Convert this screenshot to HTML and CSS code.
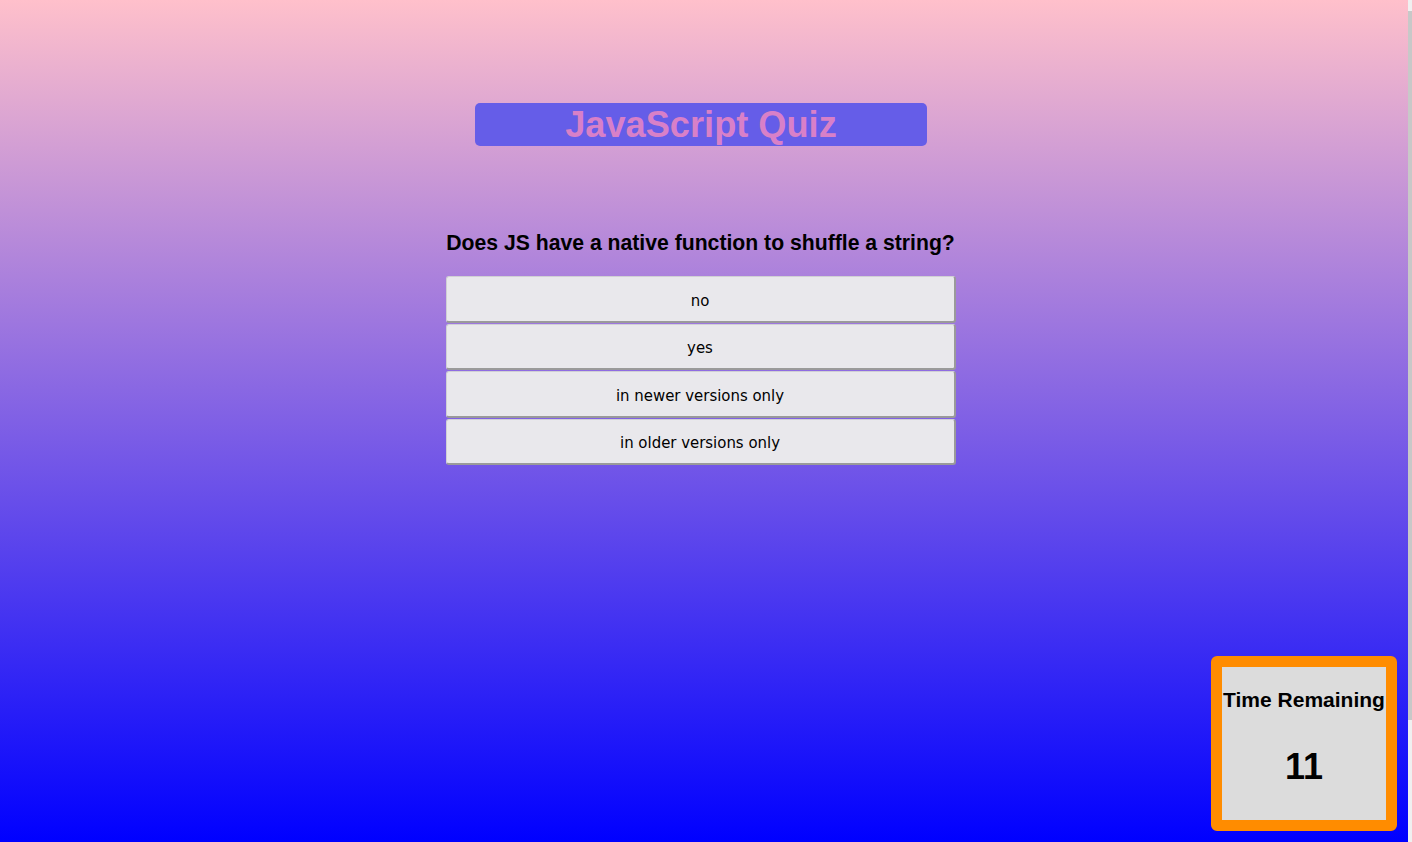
FILE: index.html
```html
<!DOCTYPE html>
<html>
<head>
<meta charset="utf-8">
<link rel="stylesheet" href="styles.css">
</head>
<body>
<div class="page">
  <header class="title-wrap">
    <h1 class="title">JavaScript Quiz</h1>
  </header>
  <main class="quiz">
    <h2 class="question">Does JS have a native function to shuffle a string?</h2>
    <div class="answers">
      <button class="answer">no</button>
      <button class="answer">yes</button>
      <button class="answer">in newer versions only</button>
      <button class="answer">in older versions only</button>
    </div>
  </main>
</div>
<aside class="timer">
  <div class="timer-inner">
    <div class="timer-label">Time Remaining</div>
    <div class="timer-value">11</div>
  </div>
</aside>
<div class="scrollbar"><div class="thumb"></div></div>
</body>
</html>
```
FILE: styles.css
```css
html, body {
  margin: 0;
  padding: 0;
  height: 100%;
  overflow: hidden;
}
body {
  font-family: "Liberation Sans", Arial, sans-serif;
  background: #f0f0f0;
}
.page {
  width: 1408px;
  height: 842px;
  background: linear-gradient(to bottom, rgb(255,192,203), rgb(0,0,255));
  display: flex;
  flex-direction: column;
  align-items: center;
  padding-top: 103px;
  box-sizing: border-box;
}
.title-wrap {
  width: 452px;
  height: 43px;
  margin-left: -6px;
  background: #655de8;
  border-radius: 5px;
  display: flex;
  align-items: center;
  justify-content: center;
}
.title {
  margin: 0;
  font-size: 36.2px;
  font-weight: bold;
  color: #d880c8;
  line-height: 43px;
}
.quiz {
  margin-top: 84px;
  margin-left: -7px;
  width: 510px;
  display: flex;
  flex-direction: column;
  align-items: center;
}
.question {
  margin: 0 0 20px;
  font-size: 21.2px;
  font-weight: bold;
  color: #000;
  white-space: nowrap;
  line-height: 26px;
}
.answers {
  width: 100%;
  display: flex;
  flex-direction: column;
  gap: 1px;
}
.answer {
  height: 46.5px;
  width: 100%;
  background: #e9e8ec;
  border: 1px solid #d0d0d4;
  border-right: 2px solid #9a9a9a;
  border-bottom: 2px solid #9a9a9a;
  border-radius: 3px;
  font-family: "DejaVu Sans Condensed", "DejaVu Sans", sans-serif;
  font-size: 16.6px;
  color: #000;
  padding: 3px 0 0;
}
.timer {
  position: fixed;
  right: 15px;
  bottom: 11px;
  width: 164px;
  height: 153px;
  border: 11px solid #ff8c00;
  border-radius: 6px;
  background: #dcdcdc;
}
.timer-inner {
  height: 100%;
  display: flex;
  flex-direction: column;
  align-items: center;
}
.timer-label {
  margin-top: 21px;
  font-size: 21px;
  font-weight: bold;
  white-space: nowrap;
}
.timer-value {
  margin-top: 34px;
  font-size: 36px;
  font-weight: bold;
}
.scrollbar {
  position: fixed;
  top: 0;
  right: 0;
  width: 4px;
  height: 842px;
  background: #f0f0f0;
}
.thumb {
  margin-top: 11px;
  height: 709px;
  background: #c8c8c8;
}
```
